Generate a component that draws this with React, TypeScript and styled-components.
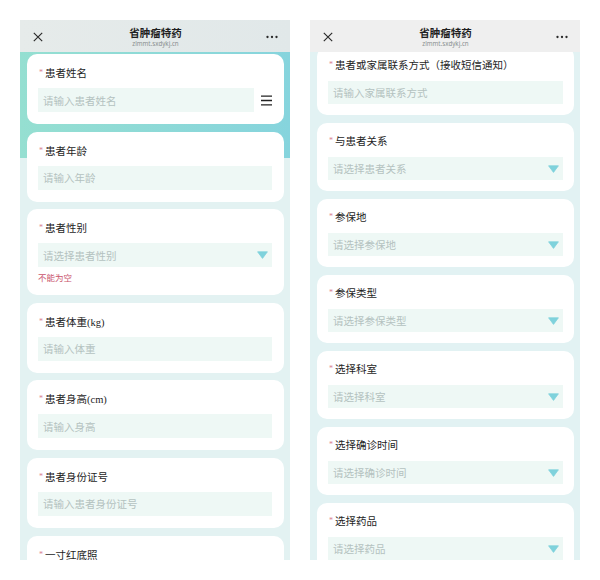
import React from "react";
import styled, { createGlobalStyle } from "styled-components";

const Global = createGlobalStyle`
  html, body { margin: 0; padding: 0; background: #ffffff; }
  body { font-family: "Noto Sans CJK SC", "Noto Sans", sans-serif; }
`;

const Stage = styled.div`
  display: flex;
  gap: 20px;
  padding: 20px;
  width: 600px;
  height: 580px;
  box-sizing: border-box;
`;

const Phone = styled.div`
  width: 270px;
  height: 540px;
  flex: none;
  display: flex;
  flex-direction: column;
  overflow: hidden;
  background: #e3f2f2;
`;

const Header = styled.header<{ $tint?: boolean }>`
  height: 32px;
  flex: none;
  display: grid;
  grid-template-columns: 1fr auto 1fr;
  align-items: center;
  padding: 0 12px 0 13px;
  background: ${(p) =>
    p.$tint ? "linear-gradient(to right, #e6ebea, #e1e8e9)" : "#efefef"};
  position: relative;
  z-index: 1;
`;

const HeaderIcon = styled.span<{ $end?: boolean }>`
  display: flex;
  justify-self: ${(p) => (p.$end ? "end" : "start")};
  margin-top: 2px;
  color: #2a2a2a;
`;

const TitleBlock = styled.div`
  display: flex;
  flex-direction: column;
  align-items: center;
  margin-top: 1px;
`;

const Title = styled.div`
  font-size: 10.5px;
  line-height: 12px;
  height: 12px;
  font-weight: 700;
  color: #1f1f1f;
`;

const Subtitle = styled.div`
  font-family: "Noto Sans", sans-serif;
  font-size: 6.2px;
  line-height: 7px;
  height: 7px;
  margin-top: 1px;
  color: #8a8f8f;
`;

const Body = styled.div<{ $band?: boolean }>`
  flex: 1;
  overflow: hidden;
  background: ${(p) =>
    p.$band
      ? "linear-gradient(to right, #95dfd1, #86d4dd) 0 0 / 100% 106px no-repeat, #e3f2f2"
      : "#e2f2f3"};
`;

const List = styled.div<{ $offset: number; $gap: number }>`
  display: flex;
  flex-direction: column;
  gap: ${(p) => p.$gap}px;
  padding: 0 6px 0 7px;
  margin-top: ${(p) => p.$offset}px;
`;

const Card = styled.div<{ $dense?: boolean }>`
  flex: none;
  background: #ffffff;
  border-radius: 10px;
  padding: ${(p) => (p.$dense ? "12px 11px 11px 11px" : "13px 12px 12px 11px")};
  display: flex;
  flex-direction: column;
  gap: ${(p) => (p.$dense ? 8 : 7)}px;
`;

const Label = styled.div`
  height: 14px;
  display: flex;
  align-items: center;
  font-family: "Liberation Serif", "Noto Sans CJK SC", serif;
  font-size: 10.5px;
  line-height: 14px;
  color: #1e1e1e;
  white-space: nowrap;
`;

const Star = styled.span`
  color: #d98190;
  font-size: 8px;
  line-height: 14px;
  margin: 0 2px 0 1px;
  position: relative;
  top: -1px;
`;

const Field = styled.div`
  display: flex;
  align-items: center;
  gap: 7px;
`;

const InputBox = styled.div<{ $dense?: boolean }>`
  flex: 1;
  height: ${(p) => (p.$dense ? 23 : 24)}px;
  background: #eef8f5;
  display: flex;
  align-items: center;
  justify-content: space-between;
  padding: 0 4px 0 5px;
  font-size: 10.5px;
  color: #b4c2c0;
  white-space: nowrap;
`;

const Caret = styled.svg`
  flex: none;
`;

const ErrorText = styled.div`
  font-size: 8.5px;
  line-height: 12px;
  height: 12px;
  color: #c9546c;
  margin-top: -3px;
`;

const MenuIcon = styled.svg`
  flex: none;
`;

const CloseIcon = () => (
  <svg width="10" height="10" viewBox="0 0 10 10">
    <path d="M0.8 0.8 L9.2 9.2 M9.2 0.8 L0.8 9.2" stroke="#2a2a2a" strokeWidth="1.15" fill="none" />
  </svg>
);

const DotsIcon = () => (
  <svg width="12" height="4" viewBox="0 0 12 4">
    <circle cx="1.5" cy="2" r="1.15" fill="#2a2a2a" />
    <circle cx="6" cy="2" r="1.15" fill="#2a2a2a" />
    <circle cx="10.5" cy="2" r="1.15" fill="#2a2a2a" />
  </svg>
);

const Triangle = () => (
  <Caret width="11" height="8" viewBox="0 0 11 8">
    <path d="M0.6 0.8 L10.4 0.8 L5.5 7.4 Z" fill="#7fd2dc" stroke="#7fd2dc" strokeWidth="0.8" strokeLinejoin="round" />
  </Caret>
);

type Item = {
  label: React.ReactNode;
  placeholder: string;
  select?: boolean;
  error?: string;
  menu?: boolean;
};

const leftItems: Item[] = [
  { label: "患者姓名", placeholder: "请输入患者姓名", menu: true },
  { label: "患者年龄", placeholder: "请输入年龄" },
  { label: "患者性别", placeholder: "请选择患者性别", select: true, error: "不能为空" },
  { label: "患者体重(kg)", placeholder: "请输入体重" },
  { label: "患者身高(cm)", placeholder: "请输入身高" },
  { label: "患者身份证号", placeholder: "请输入患者身份证号" },
  { label: "一寸红底照", placeholder: "" },
];

const rightItems: Item[] = [
  { label: "患者或家属联系方式（接收短信通知）", placeholder: "请输入家属联系方式" },
  { label: "与患者关系", placeholder: "请选择患者关系", select: true },
  { label: "参保地", placeholder: "请选择参保地", select: true },
  { label: "参保类型", placeholder: "请选择参保类型", select: true },
  { label: "选择科室", placeholder: "请选择科室", select: true },
  { label: "选择确诊时间", placeholder: "请选择确诊时间", select: true },
  { label: "选择药品", placeholder: "请选择药品", select: true },
];

const FormCard = ({ item, dense }: { item: Item; dense?: boolean }) => (
  <Card $dense={dense}>
    <Label>
      <Star>*</Star>
      {item.label}
    </Label>
    <Field>
      <InputBox $dense={dense}>
        <span>{item.placeholder}</span>
        {item.select && <Triangle />}
      </InputBox>
      {item.menu && (
        <MenuIcon width="11" height="11" viewBox="0 0 11 11">
          <path d="M0 1.2 H11 M0 5.5 H11 M0 9.8 H11" stroke="#222" strokeWidth="1.3" />
        </MenuIcon>
      )}
    </Field>
    {item.error && <ErrorText>{item.error}</ErrorText>}
  </Card>
);

const AppHeader = ({ tint }: { tint?: boolean }) => (
  <Header $tint={tint}>
    <HeaderIcon>
      <CloseIcon />
    </HeaderIcon>
    <TitleBlock>
      <Title>省肿瘤特药</Title>
      <Subtitle>zlmmt.sxdykj.cn</Subtitle>
    </TitleBlock>
    <HeaderIcon $end>
      <DotsIcon />
    </HeaderIcon>
  </Header>
);

export default function App() {
  return (
    <>
      <Global />
      <Stage>
        <Phone>
          <AppHeader tint />
          <Body $band>
            <List $offset={2} $gap={7.6}>
              {leftItems.map((it, i) => (
                <FormCard key={i} item={it} />
              ))}
            </List>
          </Body>
        </Phone>
        <Phone>
          <AppHeader />
          <Body>
            <List $offset={-5} $gap={8}>
              {rightItems.map((it, i) => (
                <FormCard key={i} item={it} dense />
              ))}
            </List>
          </Body>
        </Phone>
      </Stage>
    </>
  );
}
